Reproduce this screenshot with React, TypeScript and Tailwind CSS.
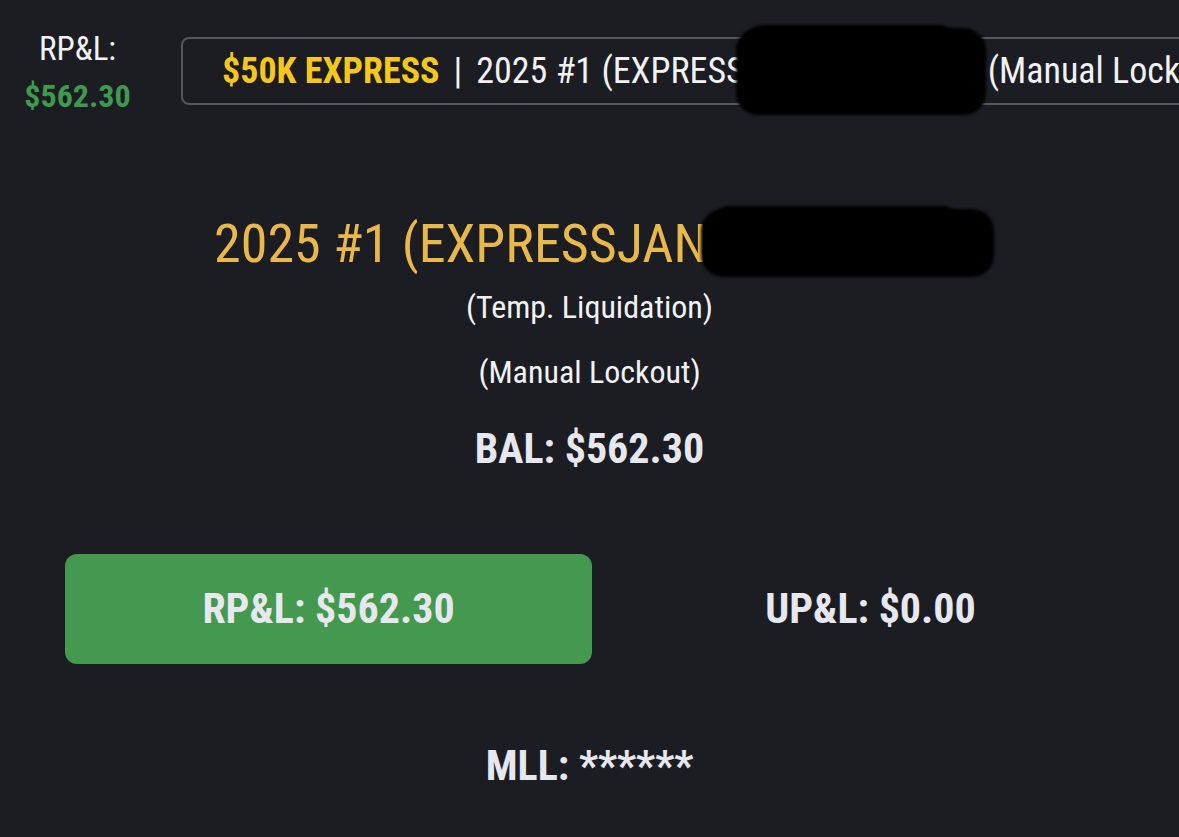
const font = "font-['Roboto_Condensed','Roboto',sans-serif] font-stretch-condensed";

function Redaction({ className }: { className: string }) {
  return (
    <span aria-hidden="true" className={`pointer-events-none absolute ${className}`}>
      <span className="absolute inset-0 rounded-[22px] bg-black blur-[1.5px]" />
      <span className="absolute left-[4%] right-[12%] -top-[3px] h-1/2 rounded-[18px] bg-black blur-[1.5px]" />
    </span>
  );
}

export default function App() {
  return (
    <div className={`min-h-screen overflow-hidden bg-[#1c1d22] ${font}`}>
      {/* header */}
      <div className="flex items-start pt-[32px]">
        <div className="flex w-[155px] shrink-0 flex-col items-center">
          <span className="text-[33px] leading-none text-[#f2f2f4]">RP&amp;L:</span>
          <span className="mt-[15px] text-[32px] font-bold leading-none text-[#3f9a4f]">$562.30</span>
        </div>
        <div className="ml-[26px] mt-[5px] flex h-[68px] w-[1100px] shrink-0 items-center rounded-lg border-2 border-[#56575c] pl-[39px] text-[36px] leading-none whitespace-nowrap">
          <span className="font-bold text-[#f7c81b]">$50K EXPRESS</span>
          <span className="mx-[14px] text-[#f2f2f4]">|</span>
          <span className="text-[#f2f2f4]">2025 #1 (EXPRESS</span>
          <span className="relative inline-block h-[36px] w-[243px]">
            <Redaction className="-left-[9px] -top-[25px] h-[87px] w-[250px]" />
          </span>
          <span className="text-[#f2f2f4]">(Manual Lockout)</span>
        </div>
      </div>

      {/* account */}
      <div className="mt-[105px] flex flex-col items-center">
        <div className="flex items-center text-[54px] leading-none whitespace-nowrap text-[#e9b84b]">
          <span>2025 #1 (EXPRESSJAN</span>
          <span className="relative inline-block h-[54px] w-[258px]">
            <Redaction className="-left-[6px] -top-[8px] h-[68px] w-[293px]" />
          </span>
        </div>
        <span className="mt-[20px] text-[32px] leading-none text-[#f2f2f4]">(Temp. Liquidation)</span>
        <span className="mt-[33px] text-[32px] leading-none text-[#f2f2f4]">(Manual Lockout)</span>
        <span className="mt-[40px] text-[42px] font-bold leading-none text-[#e7e7ef]">BAL: $562.30</span>
      </div>

      <div className="mt-[84px] grid grid-cols-2 gap-[15px] pl-[65px] pr-[45px]">
        <div className="flex h-[110px] items-center justify-center rounded-xl bg-[#44994e]">
          <span className="text-[42px] font-bold leading-none text-[#e7e7ef]">RP&amp;L: $562.30</span>
        </div>
        <div className="flex h-[110px] items-center justify-center">
          <span className="text-[42px] font-bold leading-none text-[#e7e7ef]">UP&amp;L: $0.00</span>
        </div>
      </div>

      <div className="mt-[81px] flex justify-center">
        <span className="text-[42px] font-bold leading-none text-[#e7e7ef]">MLL: ******</span>
      </div>
    </div>
  );
}
